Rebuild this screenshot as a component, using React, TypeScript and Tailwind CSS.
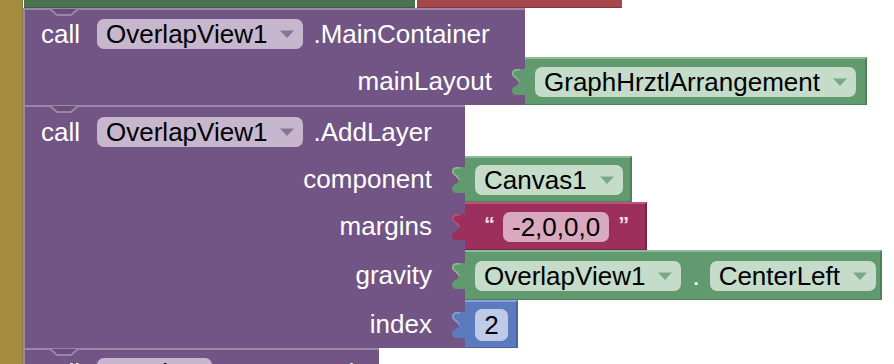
import React from "react";

type Tone = "purple" | "green" | "maroon" | "blue";

const tones: Record<Tone, { pill: string; arrow: string }> = {
  purple: { pill: "bg-[#c6b7ce]", arrow: "#8c7298" },
  green: { pill: "bg-[#c4dcc9]", arrow: "#79aa85" },
  maroon: { pill: "bg-[#d8a9bf]", arrow: "#b0607f" },
  blue: { pill: "bg-[#bdcbe7]", arrow: "#7d95c9" },
};

const Arrow = ({ color }: { color: string }) => (
  <svg width="14" height="8" viewBox="0 0 14 8">
    <path d="M0 0.5h14L7 8z" fill={color} />
  </svg>
);

const Pill = ({ text, tone, className = "" }: { text: string; tone: Tone; className?: string }) => (
  <div className={`flex h-[30px] shrink-0 items-center rounded-[7px] pl-[9px] pr-[9px] text-black ${tones[tone].pill} ${className}`}>
    <span>{text}</span>
    <span className="ml-[13px] flex">
      <Arrow color={tones[tone].arrow} />
    </span>
  </div>
);

// block's previous-connection notch on its top edge
const Notch = () => (
  <svg className="absolute left-[25px] top-[-2px]" width="30" height="9" viewBox="0 0 30 9">
    <path d="M0 1L7 7H21L28 1Z" fill="#6a4e7b" />
    <path d="M0 1L7 7H21L28 1" fill="none" stroke="#9a86a6" strokeWidth="2" />
  </svg>
);

// output tab of a value block, poking into the parent's socket
const Tab = ({ fill, edge }: { fill: string; edge: string }) => (
  <svg className="absolute left-[-14px] top-1/2 -translate-y-1/2" width="16" height="26" viewBox="0 0 16 26">
    <path d="M16 0H7C2 0 1 2 1 5C1 9 8 9 8 13C8 17 1 17 1 21C1 24 2 26 7 26H16Z" fill={fill} />
    <path d="M9 0.8H7C2.5 0.8 1.8 2.5 1.8 5C1.8 8.5 8 9 8 13" fill="none" stroke={edge} strokeWidth="1.5" />
  </svg>
);

const Label = ({ width, text }: { width: string; text: string }) => (
  <div className={`flex ${width} shrink-0 items-center justify-end border-l-2 border-[#9a86a6] bg-[#725584] pr-[33px] text-white`}>
    {text}
  </div>
);

const GreenBlock = ({ width, children }: { width: string; children: React.ReactNode }) => (
  <div className={`relative flex ${width} shrink-0 items-center border-t-2 border-r-2 border-b border-t-[#8dbb97] border-r-[#4f7f5c] border-b-[#4f7f5c] bg-[#629a6f] pl-[10px]`}>
    <Tab fill="#629a6f" edge="#8dbb97" />
    {children}
  </div>
);

export default function App() {
  return (
    <div className="flex h-[364px] w-[894px] overflow-hidden bg-white font-['Liberation_Sans',Arial,sans-serif] text-[26px] leading-none">
      <div className="w-[23px] shrink-0 border-r border-[#8a7a45] bg-[#a38c3e]" />
      <div className="flex flex-col">
        {/* blocks above, cut off */}
        <div className="flex h-[8px] shrink-0">
          <div className="ml-px w-[391px] border-b border-[#3c5f42] bg-[#4a7550]" />
          <div className="ml-[2px] w-[205px] border-b border-[#853639] bg-[#a6474b]" />
        </div>

        {/* call OverlapView1.MainContainer */}
        <div className="flex shrink-0 flex-col">
          <div className="relative flex h-[49px] w-[502px] items-center border-l-2 border-t-2 border-[#9a86a6] bg-[#725584] pl-[16px] text-white">
            <Notch />
            <span>call</span>
            <Pill text="OverlapView1" tone="purple" className="ml-[17px]" />
            <span className="ml-[10px]">.MainContainer</span>
          </div>
          <div className="flex h-[48px]">
            <Label width="w-[502px]" text="mainLayout" />
            <GreenBlock width="w-[342px]">
              <Pill text="GraphHrztlArrangement" tone="green" />
            </GreenBlock>
          </div>
        </div>

        {/* call OverlapView1.AddLayer */}
        <div className="flex shrink-0 flex-col">
          <div className="relative flex h-[51px] w-[442px] items-center border-l-2 border-t-2 border-[#9a86a6] bg-[#725584] pl-[16px] text-white">
            <Notch />
            <span>call</span>
            <Pill text="OverlapView1" tone="purple" className="ml-[17px]" />
            <span className="ml-[10px]">.AddLayer</span>
          </div>
          <div className="flex h-[46px]">
            <Label width="w-[442px]" text="component" />
            <GreenBlock width="w-[167px]">
              <Pill text="Canvas1" tone="green" />
            </GreenBlock>
          </div>
          <div className="flex h-[48px]">
            <Label width="w-[442px]" text="margins" />
            <div className="relative flex w-[182px] shrink-0 items-center border-t-2 border-r-2 border-b border-t-[#b9577f] border-r-[#7c2248] border-b-[#7c2248] bg-[#9c2f5b] pl-[19px]">
              <Tab fill="#9c2f5b" edge="#b9577f" />
              <span className="mt-[-4px] text-[22px] font-bold text-[#f3dce6]">“</span>
              <div className="ml-[8px] flex h-[30px] items-center rounded-[7px] bg-[#d8a9bf] px-[9px] text-black">-2,0,0,0</div>
              <span className="ml-[9px] mt-[-4px] text-[22px] font-bold text-[#f3dce6]">”</span>
            </div>
          </div>
          <div className="flex h-[50px]">
            <Label width="w-[442px]" text="gravity" />
            <GreenBlock width="w-[417px]">
              <Pill text="OverlapView1" tone="green" />
              <span className="ml-[11px] text-white">.</span>
              <Pill text="CenterLeft" tone="green" className="ml-[10px]" />
            </GreenBlock>
          </div>
          <div className="flex h-[48px]">
            <Label width="w-[442px]" text="index" />
            <div className="relative flex w-[53px] shrink-0 items-center border-t-2 border-r-2 border-b border-t-[#8ba3d6] border-r-[#46649f] border-b-[#46649f] bg-[#5b7bbe] pl-[10px]">
              <Tab fill="#5b7bbe" edge="#8ba3d6" />
              <div className="flex h-[32px] w-[33px] items-center justify-center rounded-[7px] bg-[#bdcbe7] text-black">2</div>
            </div>
          </div>
        </div>

        {/* next block, cut off by the bottom edge */}
        <div className="relative flex h-[48px] w-[356px] shrink-0 items-center border-l-2 border-t-2 border-[#9a86a6] bg-[#725584] pl-[16px] text-white">
          <Notch />
          <span>call</span>
          <div className="ml-[17px] flex h-[30px] w-[115px] shrink-0 items-center justify-between overflow-hidden rounded-[7px] bg-[#c6b7ce] pl-[9px] pr-[9px] text-black">
            <span>Overlap</span>
            <Arrow color="#8c7298" />
          </div>
          <span className="ml-[21px]">.SetBounds</span>
        </div>
      </div>
    </div>
  );
}
